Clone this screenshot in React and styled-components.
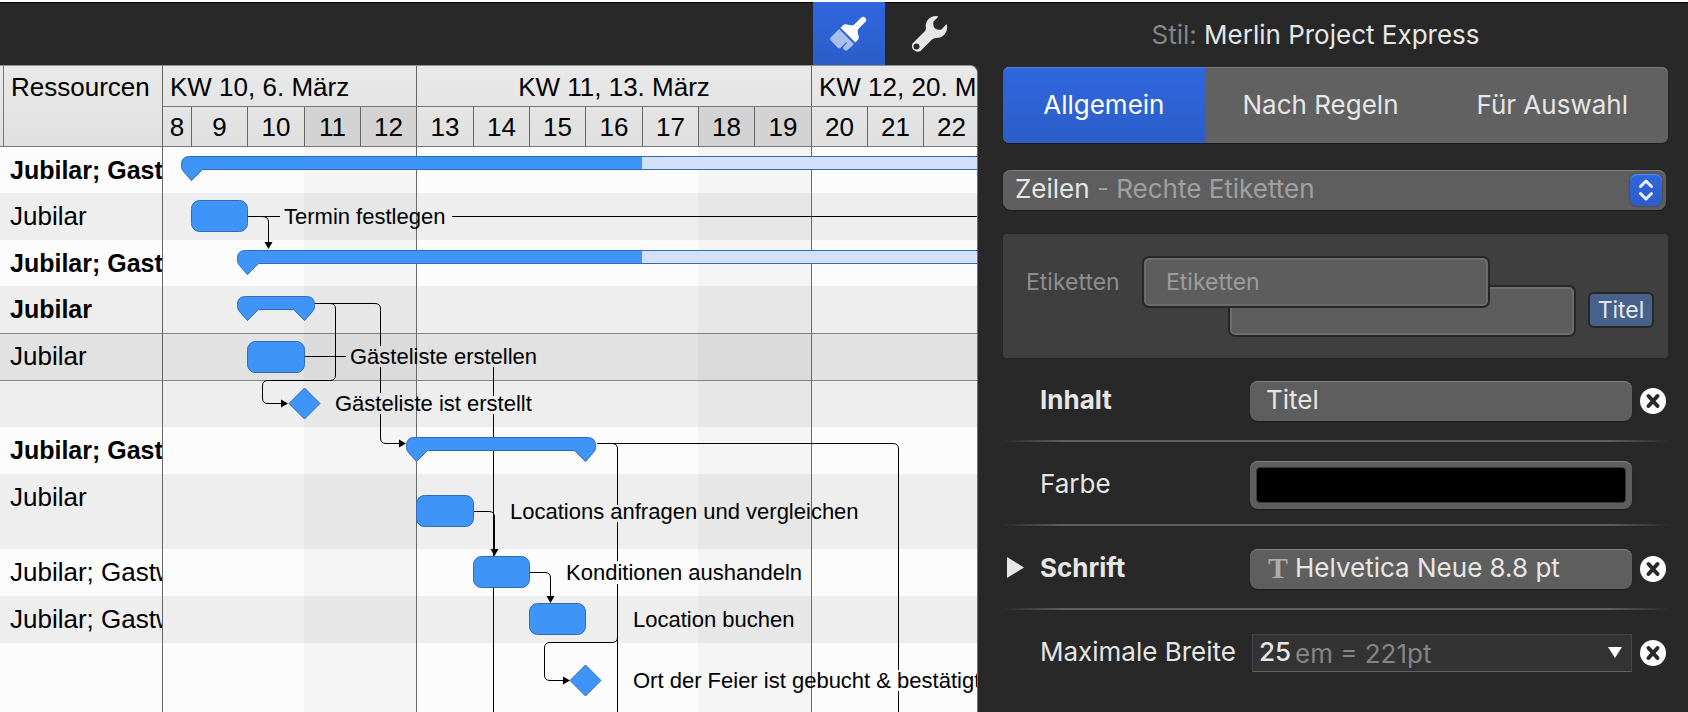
import React, { useState } from "react";
import styled, { createGlobalStyle, css } from "styled-components";

const GlobalStyle = createGlobalStyle`
  *, *::before, *::after {
    box-sizing: border-box;
  }
  body {
    margin: 0;
    background: #282828;
  }
  button, input, select {
    margin: 0;
    padding: 0;
    border: 0;
    color: inherit;
    font: inherit;
  }
`;

//---------- data ----------

const weeks = [
  { title: "KW 10, 6. März", days: 5 },
  { title: "KW 11, 13. März", days: 7, center: true },
  { title: "KW 12, 20. März", days: 3 }
];

//width of every day column in the timeline, day 8 is cut off by the scroll position
const days = [
  { day: 8, width: 29 },
  { day: 9, width: 56 },
  { day: 10, width: 57 },
  { day: 11, width: 56, weekend: true },
  { day: 12, width: 56, weekend: true },
  { day: 13, width: 57 },
  { day: 14, width: 56 },
  { day: 15, width: 56 },
  { day: 16, width: 57 },
  { day: 17, width: 56 },
  { day: 18, width: 56, weekend: true },
  { day: 19, width: 57, weekend: true },
  { day: 20, width: 56 },
  { day: 21, width: 56 },
  { day: 22, width: 56 }
];

const rows = [
  { resource: "Jubilar; Gastwirt", bold: true, height: 46 },
  { resource: "Jubilar", shade: true, height: 47 },
  { resource: "Jubilar; Gastwirt", bold: true, height: 46 },
  { resource: "Jubilar", bold: true, shade: true, height: 47 },
  { resource: "Jubilar", selected: true, height: 48 },
  { resource: "", shade: true, height: 46 },
  { resource: "Jubilar; Gastwirt", bold: true, height: 47 },
  { resource: "Jubilar", shade: true, height: 75 },
  { resource: "Jubilar; Gastwirt", height: 47 },
  { resource: "Jubilar; Gastwirt", shade: true, height: 47 },
  { resource: "", height: 68 }
];

const widthOf = list => list.reduce((sum, d) => sum + d.width, 0);
//left edge of a day in the chart
const dayX = day => widthOf(days.filter(d => d.day < day)) - 1;

const tasks = [
  { from: 9, to: 10, y: 53 },
  { from: 10, to: 11, y: 194 },
  { from: 13, to: 14, y: 348 },
  { from: 14, to: 15, y: 409 },
  { from: 15, to: 16, y: 456 }
];

const summaries = [
  { from: 9, y: 9, done: 17 },
  { from: 10, y: 103, done: 17 },
  { from: 10, to: 11, y: 149 },
  { from: 13, to: 16, y: 290 }
];

const milestones = [
  { day: 11, y: 256 },
  { day: 16, y: 533 }
];

const labels = [
  { text: "Termin festlegen", x: 121, y: 77 },
  { text: "Gästeliste erstellen", x: 187, y: 217 },
  { text: "Gästeliste ist erstellt", x: 172, y: 264 },
  { text: "Locations anfragen und vergleichen", x: 347, y: 372 },
  { text: "Konditionen aushandeln", x: 403, y: 433 },
  { text: "Location buchen", x: 470, y: 480 },
  { text: "Ort der Feier ist gebucht & bestätigt", x: 470, y: 541 }
];

//connectors are interrupted where a label crosses them
const links = [
  "M85 69.5H117",
  "M289 69.5H900",
  "M99 69.5Q105.5 69.5 105.5 75V96",
  "M152 156.5H212Q217.5 156.5 217.5 162V199M217.5 220V246M217.5 267V291Q217.5 296.5 223 296.5H236",
  "M167 156.5Q172.5 156.5 172.5 162V228Q172.5 233.5 167 233.5H105Q99.5 233.5 99.5 239V251Q99.5 256.5 105 256.5H118",
  "M142 209.5H183",
  "M330.5 220V249M330.5 267V2000",
  "M434 296.5H730Q735.5 296.5 735.5 302V523M735.5 544V2000",
  "M449 296.5Q454.5 296.5 454.5 302V358M454.5 375V414M454.5 437V2000",
  "M454.5 490Q454.5 495.5 449 495.5H387Q381.5 495.5 381.5 501V528Q381.5 533.5 387 533.5H400",
  "M311 364.5H326Q331.5 364.5 331.5 370V403",
  "M367 425.5H382Q387.5 425.5 387.5 431V450"
];

const arrows = [
  { x: 105.5, y: 102, down: true },
  { x: 125, y: 256.5 },
  { x: 243, y: 296.5 },
  { x: 331.5, y: 409, down: true },
  { x: 387.5, y: 456, down: true },
  { x: 407, y: 533.5 }
];

//---------- window ----------

const Window = styled.div`
  display: flex;
  min-height: 100vh;
  border-top: 2px solid #fff;
  background: #282828;
  box-shadow: inset 0 1px 0 #000;
  overflow: hidden;
`;

const Main = styled.main`
  flex: 1;
  min-width: 0;
  display: flex;
  flex-direction: column;
  font-family: "Liberation Sans", Arial, sans-serif;
`;

const Toolbar = styled.div`
  display: flex;
  justify-content: flex-end;
  gap: 8px;
  height: 63px;
  padding-right: 13px;
`;

const ToolButton = styled.button`
  display: flex;
  align-items: center;
  justify-content: center;
  width: 72px;
  background: ${props =>
    props.$active ? "linear-gradient(#3067df, #2c5dc8)" : "transparent"};
`;

//---------- project view ----------

const ProjectView = styled.div`
  flex: 1;
  display: flex;
  border-top: 1px solid #909090;
  border-right: 1px solid #707070;
  border-top-right-radius: 8px;
  background: #fcfcfc;
  color: #000;
  overflow: hidden;
`;

const ResourceTable = styled.table`
  flex: none;
  align-self: flex-start;
  width: 163px;
  table-layout: fixed;
  border-collapse: separate;
  border-spacing: 0;
  font-size: 26px;
  line-height: 30px;
`;

const ResourceHead = styled.th`
  height: 81px;
  padding: 6px 0 0 7px;
  border-left: 1px solid #777;
  border-bottom: 1px solid #777;
  background: linear-gradient(#e9e9e9, #e0e0e0);
  font-weight: 400;
  text-align: left;
  vertical-align: top;
`;

const HeadGap = styled.td`
  width: 3px;
  padding: 0;
  border-bottom: 1px solid #777;
  background: linear-gradient(#e9e9e9, #e0e0e0);
`;

const rowLook = css`
  height: ${props => props.$height}px;
  background: ${props =>
    props.$selected ? "#e2e2e2" : props.$shade ? "#eeeeee" : "#fcfcfc"};
  ${props =>
    props.$selected &&
    css`
      border-top: 1px solid #858585;
      border-bottom: 1px solid #858585;
    `}
`;

const ResourceCell = styled.td`
  ${rowLook}
  padding: ${props => (props.$selected ? 7 : 8)}px 0 0 10px;
  font-size: ${props => (props.$bold ? 25 : 26)}px;
  font-weight: ${props => (props.$bold ? 700 : 400)};
  vertical-align: top;
  white-space: nowrap;
  overflow: hidden;
`;

const Timeline = styled.div`
  flex: 1;
  min-width: 0;
  display: flex;
  flex-direction: column;
  border-left: 1px solid #666;
  margin-left: -1px;
  overflow: hidden;
  z-index: 1;
`;

const ScaleRow = styled.div`
  display: flex;
  border-bottom: 1px solid #777;
  font-size: 26px;
  background: ${props =>
    props.$lower
      ? "linear-gradient(#e4e4e4, #e0e0e0)"
      : "linear-gradient(#e9e9e9, #e5e5e5)"};
`;

const WeekCell = styled.div`
  flex: none;
  width: ${props => props.$width}px;
  height: 40px;
  padding-left: ${props => (props.$center ? 0 : 7)}px;
  border-right: 1px solid #666;
  line-height: 42px;
  text-align: ${props => (props.$center ? "center" : "left")};
  white-space: nowrap;
`;

const DayCell = styled.div`
  flex: none;
  width: ${props => props.$width}px;
  height: 39px;
  border-right: 1px solid #666;
  background: ${props => (props.$weekend ? "#d3d3d3" : "transparent")};
  line-height: 41px;
  text-align: center;
`;

const ChartArea = styled.div`
  position: relative;
  flex: 1;
  overflow: hidden;
`;

const Stripe = styled.div`
  ${rowLook}
`;

const Chart = styled.svg`
  position: absolute;
  top: 0;
  left: 0;
  width: 100%;
  height: 100%;
  font-size: 22px;
`;

//---------- inspector ----------

const Inspector = styled.aside`
  flex: none;
  width: 710px;
  padding: 0 20px 0 25px;
  color: #e6e6e6;
  font-family: Inter, "Liberation Sans", sans-serif;
  font-size: 26px;
  line-height: 30px;
`;

const StyleTitle = styled.h1`
  margin: 0;
  padding: 18px 40px 17px 0;
  font-size: 26px;
  font-weight: 400;
  text-align: center;
`;

const Muted = styled.span`
  color: ${props => (props.$light ? "#a0a0a0" : "#858585")};
`;

const Segments = styled.div`
  display: flex;
  height: 76px;
  border-radius: 6px;
  background: #616161;
  box-shadow: inset 0 1px 0 #7c7c7c, 0 1px 1px #1a1a1a;
  overflow: hidden;
`;

const Segment = styled.button`
  flex: ${props => (props.$active ? "202 1 0" : "232 1 0")};
  color: ${props => (props.$active ? "#fff" : "#e6e6e6")};
  background: ${props =>
    props.$active ? "linear-gradient(#3067df, #2c5dc8)" : "transparent"};
  box-shadow: ${props => (props.$active ? "inset 0 1px 0 #4c7ce2" : "none")};
`;

const fieldLook = css`
  height: 40px;
  border-radius: 8px;
  background: #5e5e5e;
  box-shadow: inset 0 1px 0 #7c7c7c, 0 1px 1px #1a1a1a;
`;

const Popup = styled.div`
  ${fieldLook}
  position: relative;
  display: flex;
  align-items: center;
  justify-content: space-between;
  margin: 27px 2px 24px 0;
  padding: 0 4px 0 12px;
`;

const PopupCaption = styled.span`
  padding-bottom: 3px;
`;

//the native list lies over the two-coloured caption
const PopupSelect = styled.select`
  position: absolute;
  inset: 0;
  width: 100%;
  opacity: 0;
`;

const Stepper = styled.span`
  display: flex;
  align-items: center;
  justify-content: center;
  width: 32px;
  height: 32px;
  border-radius: 7px;
  background: linear-gradient(#3067df, #2c5dc8);
  box-shadow: inset 0 1px 0 #5b8aec, 0 0 2px #333;
`;

const Preview = styled.div`
  display: grid;
  grid-template-columns: 86px 86px 1fr 86px 66px;
  grid-template-rows: 29px 23px 29px;
  height: 124px;
  padding: 22px 14px 21px 25px;
  border-radius: 4px;
  background: #3f3f3f;
  font-size: 23px;
`;

const PreviewCaption = styled.span`
  grid-area: 1 / 1 / 3 / 2;
  align-self: center;
  margin-left: -2px;
  color: #8e8e8e;
`;

const PreviewBox = styled.div`
  display: flex;
  align-items: center;
  padding-left: 22px;
  border: 2px solid #272727;
  border-radius: 7px;
  background: #5d5d5d;
  box-shadow: inset 0 0 0 2px #6c6c6c;
  color: #9c9c9c;
`;

const FrontBox = styled(PreviewBox)`
  grid-area: 1 / 2 / 3 / 4;
  margin: 0 12px 0 28px;
  z-index: 1;
`;

const BackBox = styled(PreviewBox)`
  grid-area: 2 / 3 / 4 / 5;
  margin: 0 12px 0 28px;
`;

const Tag = styled.button`
  grid-area: 2 / 5 / 4 / 6;
  align-self: center;
  height: 36px;
  margin-bottom: 2px;
  border: 2px solid #272727;
  border-radius: 6px;
  background: #46628a;
  color: #e6e6ea;
  line-height: 30px;
`;

const PropertyRow = styled.div`
  display: grid;
  grid-template-columns: 37px 210px 1fr 26px;
  align-items: center;
  height: 84px;
  padding: 4px 2px 0 0;
  border-bottom: 2px solid transparent;
  border-image: ${props =>
    props.$last
      ? "none"
      : "linear-gradient(90deg, #282828, #5d5d5d 9%, #5d5d5d 91%, #282828) 2"};
`;

const PropertyLabel = styled.label`
  grid-column: 2;
  padding-bottom: 3px;
  font-weight: ${props => (props.$bold ? 700 : 400)};
  white-space: nowrap;
`;

const Disclosure = styled.button`
  grid-column: 1;
  display: flex;
  padding: 0 0 4px 4px;
  background: none;
`;

const ContentField = styled.input`
  ${fieldLook}
  width: calc(100% - 8px);
  padding: 0 16px 3px;
`;

const ColorWell = styled.button`
  ${fieldLook}
  width: calc(100% - 8px);
  height: 48px;
  padding: 6px;
`;

const ColorSwatch = styled.span`
  display: block;
  height: 36px;
  border: 1px solid #3a3a3a;
  border-radius: 4px;
  background: #000;
`;

const FontButton = styled.button`
  ${fieldLook}
  display: flex;
  align-items: center;
  gap: 7px;
  width: calc(100% - 8px);
  padding: 0 18px 3px;
`;

const FontGlyph = styled.span`
  color: #ababab;
  font-family: "Liberation Serif", serif;
  font-size: 30px;
  font-weight: 700;
`;

const Combo = styled.div`
  display: flex;
  align-items: center;
  height: 38px;
  margin: 0 8px 0 2px;
  padding: 0 9px 0 6px;
  border: 1px solid #454545;
  border-bottom-color: #626262;
  background: #333;
`;

const ComboInput = styled.input`
  width: 36px;
  height: 30px;
  padding-bottom: 2px;
  background: none;
  outline: none;
  font-weight: 500;
`;

const ComboUnit = styled.span`
  flex: 1;
  padding-top: 2px;
  color: #858585;
`;

const ComboArrow = styled.button`
  display: flex;
  padding-bottom: 2px;
  background: none;
`;

const ResetButton = styled.button`
  grid-column: 4;
  display: flex;
  background: none;
`;

//---------- icons ----------

const BrushIcon = () => (
  <svg width="38" height="38" viewBox="0 0 38 38" aria-hidden="true">
    <g transform="rotate(45 19 19)">
      <rect x="16" y="-4" width="6" height="19" rx="3" fill="#fff" />
      <path
        d="M16.2 8C16 13 8.500 12.500 8.500 17V20.500H29.500V17C29.500 12.500 22 13 21.800 8Z"
        fill="#fff"
      />
      <path
        d="M8.500 22.500H29.500V30.500Q29.500 33.500 27 33.500H26Q24 33.500 24 31V27.500Q24 26.500 23.500 26.500Q22.800 26.500 22.800 27.500V34.500Q22.800 36.500 20.500 36.500H11Q8.500 36.500 8.500 34Z"
        fill="#a9bfee"
      />
    </g>
  </svg>
);

const WrenchIcon = () => (
  <svg width="38" height="38" viewBox="0 0 38 38" aria-hidden="true">
    <path
      d="M27.500 1Q20.500 0.500 17 6Q15 9.500 16 13.500Q16 15 14.500 16.500L2.500 28.500A5.800 5.800 0 0 0 10.500 36L22 24.500Q23.500 23 26 23Q31.500 23 34.500 19.500Q38 15 37 9.500L36 9.500L31.500 14.500Q28 15.500 25 13.500Q22.500 10.500 23.500 6.500L28 2Z"
      fill="#e6e6e6"
    />
    <circle cx="6.500" cy="31.500" r="3" fill="#282828" />
  </svg>
);

const ResetIcon = () => (
  <svg width="26" height="26" viewBox="0 0 26 26" aria-hidden="true">
    <circle cx="13" cy="13" r="13" fill="#fff" />
    <path
      d="M8.500 8L17.500 18M17.500 8L8.500 18"
      stroke="#282828"
      strokeWidth="4"
      strokeLinecap="round"
    />
  </svg>
);

//---------- chart ----------

//outline of a summary bar, with a point under each end
const summaryPath = (x1, x2, y, closed) => {
  const left = `M${x1 + 11} ${y + 13}L${x1} ${y + 24}L${x1 - 8} ${y + 15}Q${x1 -
    10} ${y + 13} ${x1 - 10} ${y + 10}V${y + 8}Q${x1 - 10} ${y} ${x1 - 2} ${y}`;
  if (!closed) {
    return `${left}H${x2}V${y + 13}Z`;
  }
  return `${left}H${x2 + 2}Q${x2 + 10} ${y} ${x2 + 10} ${y + 8}V${y +
    10}Q${x2 + 10} ${y + 13} ${x2 + 8} ${y + 15}L${x2} ${y + 24}L${x2 -
    11} ${y + 13}Z`;
};

const Bar = ({ task }) => {
  const x = dayX(task.from);
  return (
    <rect
      x={x + 0.5}
      y={task.y + 0.5}
      width={dayX(task.to) - x}
      height="31"
      rx="8"
      fill="#3f94f7"
      stroke="#2f6cb5"
    />
  );
};

const SummaryBar = ({ item }) => {
  const x = dayX(item.from) + 0.5;
  const y = item.y + 0.5;
  if (item.to) {
    return (
      <path
        d={summaryPath(x, dayX(item.to) + 0.5, y, true)}
        fill="#3f94f7"
        stroke="#2f6cb5"
      />
    );
  }
  const done = dayX(item.done);
  return (
    <g>
      <path d={summaryPath(x, 2000, y)} fill="#3f94f7" stroke="#2f6cb5" />
      <rect x={done} y={y + 0.5} width="2000" height="12" fill="#d3e0f8" />
    </g>
  );
};

const GanttChart = () => (
  <Chart role="img" aria-label="Balkenplan">
    {days
      .filter(d => d.weekend)
      .map(d => (
        <rect
          key={d.day}
          x={dayX(d.day)}
          y="0"
          width={d.width}
          height="100%"
          fill="#000"
          fillOpacity="0.027"
        />
      ))}
    {[13, 20].map(day => (
      <rect
        key={day}
        x={dayX(day)}
        y="0"
        width="1"
        height="100%"
        fill="#6a6a6a"
      />
    ))}
    {links.map(d => (
      <path key={d} d={d} fill="none" stroke="#000" />
    ))}
    {arrows.map(({ x, y, down }) => (
      <path
        key={`${x}-${y}`}
        d={
          down
            ? `M${x} ${y}L${x - 4} ${y - 7}H${x + 4}Z`
            : `M${x} ${y}L${x - 7} ${y - 4}V${y + 4}Z`
        }
      />
    ))}
    {summaries.map(item => (
      <SummaryBar key={item.y} item={item} />
    ))}
    {tasks.map(task => (
      <Bar key={task.y} task={task} />
    ))}
    {milestones.map(({ day, y }) => (
      <path
        key={y}
        d={`M${dayX(day) + 0.5} ${y - 15}l15.5 15.5l-15.5 15.5l-15.5 -15.5Z`}
        fill="#3f94f7"
        stroke="#2f6cb5"
      />
    ))}
    {labels.map(({ text, x, y }) => (
      <text key={text} x={x} y={y}>
        {text}
      </text>
    ))}
  </Chart>
);

//header with weeks and days, the chart below it
const TimelineView = () => {
  let first = 0;
  return (
    <Timeline>
      <ScaleRow>
        {weeks.map(week => {
          const width = widthOf(days.slice(first, first + week.days));
          first += week.days;
          return (
            <WeekCell key={week.title} $width={width} $center={week.center}>
              {week.title}
            </WeekCell>
          );
        })}
      </ScaleRow>
      <ScaleRow $lower>
        {days.map(({ day, width, weekend }) => (
          <DayCell key={day} $width={width} $weekend={weekend}>
            {day}
          </DayCell>
        ))}
      </ScaleRow>
      <ChartArea>
        {rows.map((row, i) => (
          <Stripe
            key={i}
            $height={row.height}
            $shade={row.shade}
            $selected={row.selected}
          />
        ))}
        <GanttChart />
      </ChartArea>
    </Timeline>
  );
};

const Resources = () => (
  <ResourceTable>
    <thead>
      <tr>
        <HeadGap />
        <ResourceHead scope="col">Ressourcen</ResourceHead>
      </tr>
    </thead>
    <tbody>
      {rows.map((row, i) => (
        <tr key={i}>
          <ResourceCell
            colSpan="2"
            $height={row.height}
            $bold={row.bold}
            $shade={row.shade}
            $selected={row.selected}
          >
            {row.resource}
          </ResourceCell>
        </tr>
      ))}
    </tbody>
  </ResourceTable>
);

const Reset = ({ of }) => (
  <ResetButton type="button" aria-label={`${of} zurücksetzen`}>
    <ResetIcon />
  </ResetButton>
);

const tabs = ["Allgemein", "Nach Regeln", "Für Auswahl"];

const StyleInspector = () => {
  const [tab, setTab] = useState("Allgemein");
  const [content, setContent] = useState("Titel");
  const [maxWidth, setMaxWidth] = useState("25");

  return (
    <Inspector>
      <StyleTitle>
        <Muted>Stil:</Muted> Merlin Project Express
      </StyleTitle>
      <Segments>
        {tabs.map(name => (
          <Segment
            key={name}
            type="button"
            aria-pressed={name === tab}
            $active={name === tab}
            onClick={() => setTab(name)}
          >
            {name}
          </Segment>
        ))}
      </Segments>
      <Popup>
        <PopupCaption aria-hidden="true">
          Zeilen <Muted $light>- Rechte Etiketten</Muted>
        </PopupCaption>
        <Stepper>
          <svg width="16" height="24" viewBox="0 0 16 24" aria-hidden="true">
            <path
              d="M2.500 8.500L8 3L13.500 8.500M2.500 15.500L8 21L13.500 15.500"
              fill="none"
              stroke="#e9effc"
              strokeWidth="3"
              strokeLinecap="round"
              strokeLinejoin="round"
            />
          </svg>
        </Stepper>
        <PopupSelect aria-label="Stilelement">
          <option>Zeilen - Rechte Etiketten</option>
        </PopupSelect>
      </Popup>
      <Preview>
        <PreviewCaption>Etiketten</PreviewCaption>
        <FrontBox>Etiketten</FrontBox>
        <BackBox />
        <Tag type="button">Titel</Tag>
      </Preview>
      <PropertyRow>
        <PropertyLabel htmlFor="content" $bold>
          Inhalt
        </PropertyLabel>
        <ContentField
          id="content"
          value={content}
          onChange={e => setContent(e.target.value)}
        />
        <Reset of="Inhalt" />
      </PropertyRow>
      <PropertyRow>
        <PropertyLabel htmlFor="color">Farbe</PropertyLabel>
        <ColorWell id="color" type="button">
          <ColorSwatch />
        </ColorWell>
      </PropertyRow>
      <PropertyRow>
        <Disclosure type="button" aria-label="Schrift aufklappen">
          <svg width="17" height="21" viewBox="0 0 17 21" aria-hidden="true">
            <path d="M0 0L17 10.500L0 21Z" fill="#e6e6e6" />
          </svg>
        </Disclosure>
        <PropertyLabel htmlFor="font" $bold>
          Schrift
        </PropertyLabel>
        <FontButton id="font" type="button">
          <FontGlyph>T</FontGlyph>
          Helvetica Neue 8.8 pt
        </FontButton>
        <Reset of="Schrift" />
      </PropertyRow>
      <PropertyRow $last>
        <PropertyLabel htmlFor="max-width">Maximale Breite</PropertyLabel>
        <Combo>
          <ComboInput
            id="max-width"
            value={maxWidth}
            onChange={e => setMaxWidth(e.target.value)}
          />
          <ComboUnit>em = 221pt</ComboUnit>
          <ComboArrow type="button" aria-label="Werte anzeigen">
            <svg width="14" height="11" viewBox="0 0 14 11" aria-hidden="true">
              <path d="M0 0H14L7 11Z" fill="#fff" />
            </svg>
          </ComboArrow>
        </Combo>
        <Reset of="Maximale Breite" />
      </PropertyRow>
    </Inspector>
  );
};

const App = () => (
  <>
    <GlobalStyle />
    <Window>
      <Main>
        <Toolbar>
          <ToolButton type="button" aria-label="Stil" $active>
            <BrushIcon />
          </ToolButton>
          <ToolButton type="button" aria-label="Einstellungen">
            <WrenchIcon />
          </ToolButton>
        </Toolbar>
        <ProjectView>
          <Resources />
          <TimelineView />
        </ProjectView>
      </Main>
      <StyleInspector />
    </Window>
  </>
);

export default App;
